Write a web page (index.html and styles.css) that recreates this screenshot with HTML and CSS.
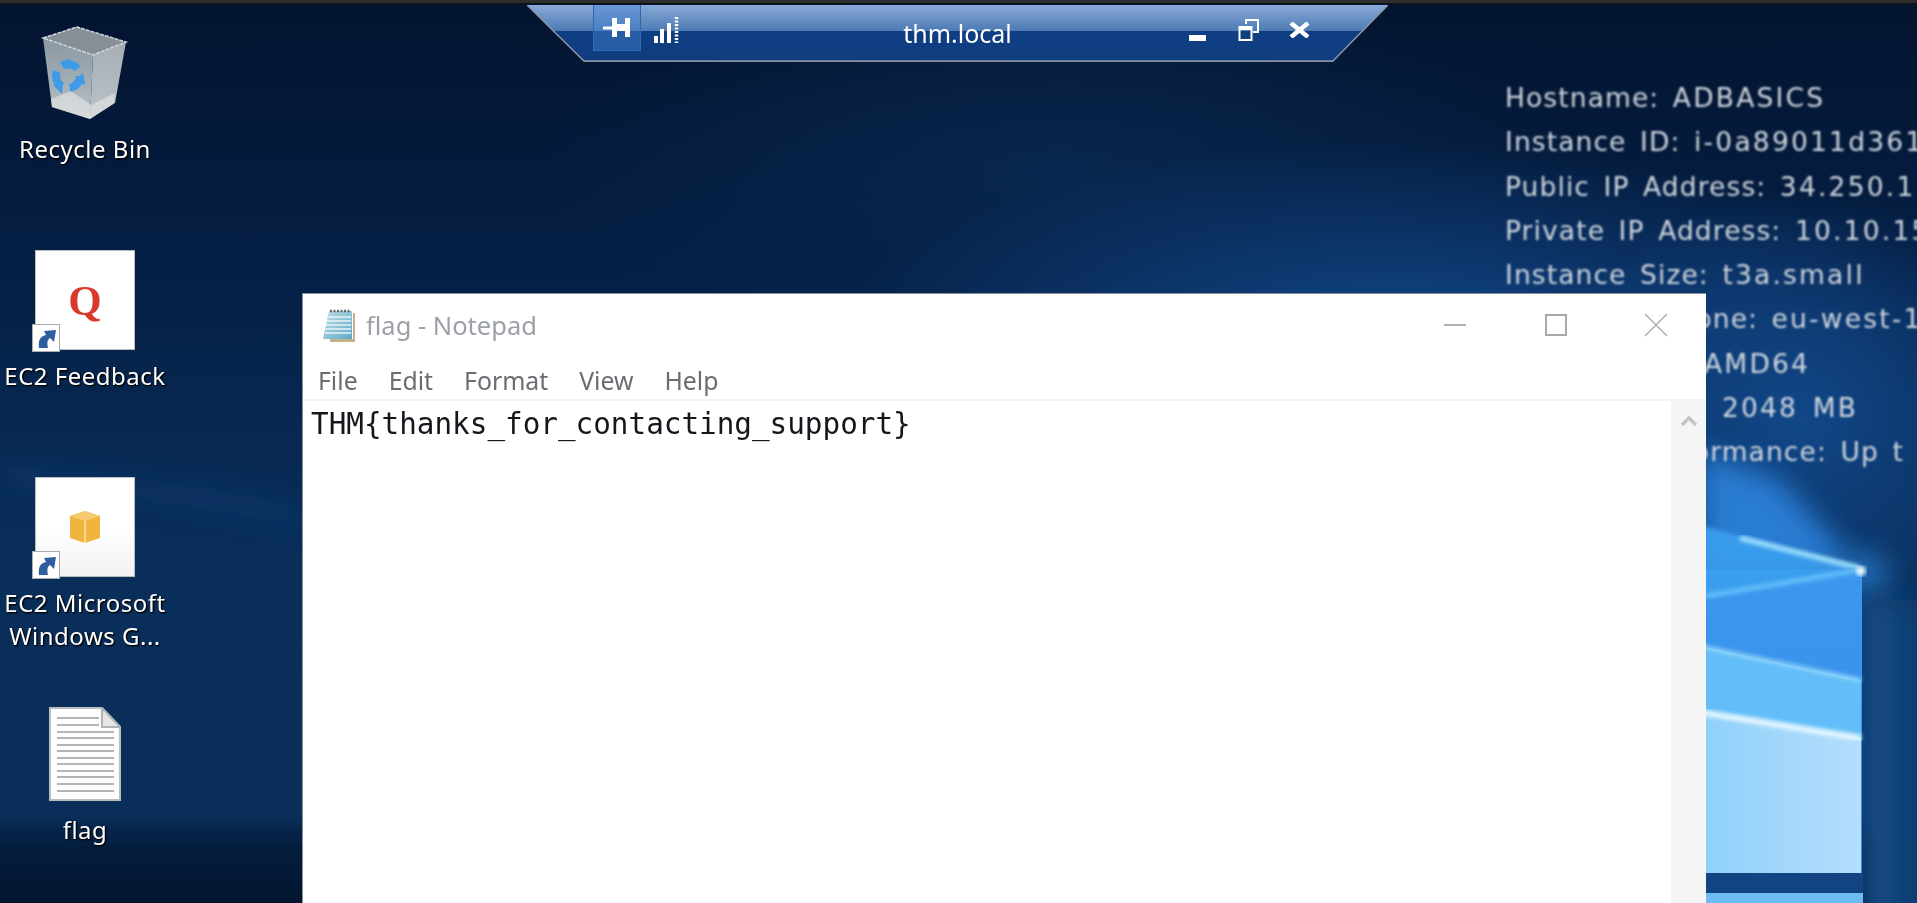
FILE: index.html
```html
<!DOCTYPE html>
<html lang="en">
<head>
    <meta charset="UTF-8">
    <meta name="viewport" content="width=device-width, initial-scale=1.0">
    <title>thm.local</title>
    <link rel="stylesheet" href="styles.css">
</head>
<body>
<div class="desktop">

    <!-- wallpaper -->
    <svg class="wallpaper" viewBox="0 0 1917 903" preserveAspectRatio="none">
        <defs>
            <linearGradient id="wpBase" x1="0" y1="0" x2="0" y2="1">
                <stop offset="0" stop-color="#03142f"/>
                <stop offset="0.3" stop-color="#051f45"/>
                <stop offset="0.6" stop-color="#092e5a"/>
                <stop offset="0.9" stop-color="#0a2f5a"/>
                <stop offset="0.94" stop-color="#041c3c"/>
                <stop offset="1" stop-color="#031630"/>
            </linearGradient>
            <radialGradient id="wpMid">
                <stop offset="0" stop-color="#0a2a54" stop-opacity="0.75"/>
                <stop offset="1" stop-color="#0a2a54" stop-opacity="0"/>
            </radialGradient>
            <radialGradient id="wpLow">
                <stop offset="0" stop-color="#114788"/>
                <stop offset="1" stop-color="#114788" stop-opacity="0"/>
            </radialGradient>
            <linearGradient id="wpRight" x1="0" y1="0" x2="1" y2="0">
                <stop offset="0" stop-color="#15528f"/>
                <stop offset="1" stop-color="#0c3464"/>
            </linearGradient>
            <linearGradient id="pane1" x1="0" y1="0" x2="0" y2="1">
                <stop offset="0" stop-color="#3b98ee"/>
                <stop offset="1" stop-color="#358de6"/>
            </linearGradient>
            <linearGradient id="pane3" x1="0" y1="0" x2="1" y2="0">
                <stop offset="0" stop-color="#8ed0fa"/>
                <stop offset="1" stop-color="#b4defc"/>
            </linearGradient>
            <filter id="soft"><feGaussianBlur stdDeviation="2"/></filter>
            <filter id="softer" x="-50%" y="-100%" width="200%" height="300%"><feGaussianBlur stdDeviation="14"/></filter>
        </defs>
        <rect width="1917" height="903" fill="url(#wpBase)"/>
        <ellipse cx="1060" cy="170" rx="520" ry="190" fill="url(#wpMid)"/>
        <ellipse cx="1400" cy="340" rx="560" ry="200" fill="url(#wpLow)"/>
        <ellipse cx="1800" cy="420" rx="260" ry="230" fill="url(#wpLow)"/>
        <path d="M1700 450 L1780 480 L1862 570 L1700 570 Z" fill="#2a80d8" opacity="0.95" filter="url(#softer)"/>
        <circle cx="1866" cy="575" r="22" fill="#2f86d8" opacity="0.7" filter="url(#softer)"/>
        <rect x="1860" y="600" width="80" height="330" fill="url(#wpRight)" filter="url(#softer)"/>
        <path d="M0 470 C80 478 220 490 300 512 L300 522 C200 500 80 488 0 482 Z" fill="#14508f" opacity="0.5" filter="url(#softer)"/>

        <!-- window logo -->
        <path d="M1700 570 L1862 570 V873 H1700 Z" fill="url(#pane1)"/>
        <path d="M1700 646 L1861 680 V740 L1700 712 Z" fill="#62bdf8"/>
        <path d="M1700 712 L1861 738 V873 H1700 Z" fill="url(#pane3)"/>
        <path d="M1700 893 H1863 V903 H1700 Z" fill="#6dbcf5"/>
        <path d="M1700 873 H1863 V893 H1700 Z" fill="#124483"/>
        <path d="M1700 525 L1860 568 L1700 600 Z" fill="#3a9ff0" opacity="0.9" filter="url(#soft)"/>
        <path d="M1740 538 L1860 568" fill="none" stroke="#a6e6ff" stroke-width="5" filter="url(#soft)"/>
        <path d="M1706 596 L1860 570" fill="none" stroke="#6cc6fb" stroke-width="4" filter="url(#soft)"/>
        <path d="M1700 646 L1861 680" stroke="#a8e2ff" stroke-width="3" filter="url(#soft)"/>
        <path d="M1700 712 L1861 738" stroke="#e8f8ff" stroke-width="6" filter="url(#soft)"/>
        <path d="M1862 568 V873" stroke="#9fdcff" stroke-width="3" filter="url(#soft)"/>
        <circle cx="1861" cy="571" r="5" fill="#e6fbff" filter="url(#soft)"/>
    </svg>

    <div class="topline"></div>

    <!-- desktop icons -->
    <div class="shortcuts">
        <div class="shortcut">
            <div class="shortcut-icon">
                <svg class="soft-icon" width="100" height="100" viewBox="0 0 100 100">
                    <defs>
                        <linearGradient id="binLeft" x1="0" y1="0" x2="0" y2="1">
                            <stop offset="0" stop-color="#8a98a3"/>
                            <stop offset="0.7" stop-color="#a9b4bb"/>
                            <stop offset="1" stop-color="#c6cbcd"/>
                        </linearGradient>
                        <linearGradient id="binRight" x1="0" y1="0" x2="0" y2="1">
                            <stop offset="0" stop-color="#a6aeb4"/>
                            <stop offset="1" stop-color="#bcc3c7"/>
                        </linearGradient>
                    </defs>
                    <path d="M8 15 L42 4 L91 19 L58 32 Z" fill="#868f96"/>
                    <path d="M8 15 L58 32 L55 96 L17 84 Z" fill="url(#binLeft)"/>
                    <path d="M58 32 L91 19 L80 80 L55 96 Z" fill="url(#binRight)"/>
                    <path d="M16 76 L36 68 L56 82 L80 70 L79 80 L55 96 L17 84 Z" fill="#dcdfdf" opacity="0.75"/>
                    <path d="M8 15 L42 4 L91 19 L58 32 Z" fill="none" stroke="#d2d8dc" stroke-width="1.5" stroke-dasharray="4 1"/>
                    <circle cx="33" cy="53" r="12" fill="none" stroke="#3f9be8" stroke-width="8" stroke-dasharray="17 8"/>
                    <path d="M33 35 L41 42 L31 47 Z M18 62 L28 60 L27 71 Z M48 50 L50 62 L39 58 Z" fill="#3f9be8"/>
                </svg>
            </div>
            <div class="shortcut-label">Recycle Bin</div>
        </div>

        <div class="shortcut">
            <div class="shortcut-icon tile">
                <span class="quote-q">Q</span>
                <span class="link-badge">
                    <svg width="22" height="22" viewBox="0 0 22 22"><path d="M4 21 C3 12 6 9 11 8 L9 4 L21 3 L19 15 L15 11 C12 13 12 16 13 21 Z" fill="#2f5f9e"/></svg>
                </span>
            </div>
            <div class="shortcut-label">EC2 Feedback</div>
        </div>

        <div class="shortcut">
            <div class="shortcut-icon tile tile-fade">
                <svg class="soft-icon" width="32" height="32" viewBox="0 0 32 32">
                    <path d="M16 0 L31 5 V27 L16 32 L1 27 V5 Z" fill="#f0b53f"/>
                    <path d="M1 5 L16 10 L31 5 L16 0 Z" fill="#f6cb70"/>
                    <path d="M15 10 H17 V32 H15 Z" fill="#f8d88e"/>
                </svg>
                <span class="link-badge">
                    <svg width="22" height="22" viewBox="0 0 22 22"><path d="M4 21 C3 12 6 9 11 8 L9 4 L21 3 L19 15 L15 11 C12 13 12 16 13 21 Z" fill="#2f5f9e"/></svg>
                </span>
            </div>
            <div class="shortcut-label">EC2 Microsoft Windows G...</div>
        </div>

        <div class="shortcut">
            <div class="shortcut-icon">
                <svg class="soft-icon" width="72" height="94" viewBox="0 0 72 94">
                    <path d="M1 1 H53 L71 20 V93 H1 Z" fill="#fdfdfd" stroke="#b9bdc0" stroke-width="2"/>
                    <path d="M53 1 V20 H71 Z" fill="#e4e6e7" stroke="#b0b4b7" stroke-width="2"/>
                    <path d="M8 11 H50 M8 18 H50 M8 25 H65 M8 31 H65 M8 38 H65 M8 44 H65 M8 51 H65 M8 57 H65 M8 64 H65 M8 70 H65 M8 77 H65 M8 84 H65" stroke="#b2b4b6" stroke-width="2"/>
                </svg>
            </div>
            <div class="shortcut-label">flag</div>
        </div>
    </div>

    <!-- bginfo text -->
    <div class="bginfo">
        <div>Hostname: <span class="val">ADBASICS</span></div>
        <div>Instance ID: <span class="val">i-0a89011d361</span></div>
        <div>Public IP Address: <span class="val">34.250.1</span></div>
        <div>Private IP Address: <span class="val">10.10.15</span></div>
        <div>Instance Size: <span class="val">t3a.small</span></div>
        <div>Availability Zone: <span class="val">eu-west-1</span></div>
        <div>Architecture: <span class="val">AMD64</span></div>
        <div>Total Memory: <span class="val">2048 MB</span></div>
        <div>Network Performance: Up t</div>
    </div>

    <!-- remote desktop connection bar -->
    <div class="connbar">
        <svg class="connbar-shape" viewBox="0 0 861 57">
            <defs>
                <linearGradient id="barFill" x1="0" y1="0" x2="0" y2="1">
                    <stop offset="0" stop-color="#8aa9d8"/>
                    <stop offset="0.46" stop-color="#4b7ab3"/>
                    <stop offset="0.46" stop-color="#103e82"/>
                    <stop offset="0.96" stop-color="#0f3d80"/>
                    <stop offset="0.96" stop-color="#7c8ea8"/>
                    <stop offset="1" stop-color="#516a8c"/>
                </linearGradient>
            </defs>
            <path d="M0 0 H861 L805 57 H58 Z" fill="url(#barFill)"/>
            <path d="M0 0 L58 57 H805 L861 0" fill="none" stroke="#8c97a6" stroke-width="1.5"/>
        </svg>
        <div class="connbar-left">
            <button class="bar-btn pin-btn">
                <svg width="28" height="20" viewBox="0 0 28 20"><path d="M0 8.5 H9 V0 H14 V6 H22 V0 H27 V19 H22 V13 H14 V19 H9 V11.5 H0 Z" fill="#fff"/></svg>
            </button>
            <svg class="signal" width="27" height="28" viewBox="0 0 27 28">
                <path d="M0 20 H4 V27 H0 Z M6 13 H10 V27 H6 Z M13 7 H17 V27 H13 Z" fill="#fff"/>
                <path d="M22.5 1 V27" stroke="#fff" stroke-width="3.5" stroke-dasharray="2 1.5"/>
            </svg>
        </div>
        <div class="connbar-title">thm.local</div>
        <div class="connbar-right">
            <svg width="17" height="6" viewBox="0 0 17 6"><rect width="17" height="6" fill="#fff"/></svg>
            <svg width="21" height="22" viewBox="0 0 21 22"><path d="M8 5 V1 H20 V13 H15" fill="none" stroke="#fff" stroke-width="2"/><path d="M1.5 8 H13.5 V21 H1.5 Z" fill="none" stroke="#fff" stroke-width="2"/><rect x="1" y="7" width="13" height="4" fill="#fff"/></svg>
            <svg class="close-x" width="21" height="16" viewBox="0 0 21 16"><path d="M2 1 L19 15 M19 1 L2 15" stroke="#fff" stroke-width="4.5"/></svg>
        </div>
    </div>

    <!-- notepad -->
    <div class="notepad">
        <div class="np-title">
            <svg class="np-icon" width="34" height="35" viewBox="0 0 34 35">
                <defs>
                    <linearGradient id="npPage" x1="0" y1="0" x2="1" y2="1">
                        <stop offset="0" stop-color="#bfe0ea"/>
                        <stop offset="1" stop-color="#5fa9c4"/>
                    </linearGradient>
                </defs>
                <path d="M31 5 H33 V34 H8 V31 H31 Z" fill="#c4b08c"/>
                <path d="M7 3 H30 V31 H1 Z" fill="url(#npPage)"/>
                <path d="M6 9 H29 M5 13 H29 M4 17 H29 M3.5 21 H29 M3 25 H29" stroke="#e9f4f7" stroke-width="1.5"/>
                <path d="M8 3 H29" stroke="#666" stroke-width="2.5" stroke-dasharray="2 1.5"/>
            </svg>
            <span class="np-title-text">flag - Notepad</span>
            <div class="np-controls">
                <svg width="24" height="24" viewBox="0 0 24 24"><path d="M1 12 H23" stroke="#b0b0b0" stroke-width="2"/></svg>
                <svg width="24" height="24" viewBox="0 0 24 24"><rect x="2" y="2" width="20" height="20" fill="none" stroke="#a8a8a8" stroke-width="2"/></svg>
                <svg width="24" height="24" viewBox="0 0 24 24"><path d="M1 1 L23 23 M23 1 L1 23" stroke="#b0b0b0" stroke-width="1.6"/></svg>
            </div>
        </div>
        <div class="np-menu">
            <span>File</span>
            <span>Edit</span>
            <span>Format</span>
            <span>View</span>
            <span>Help</span>
        </div>
        <div class="np-body">
            <div class="np-text">THM{thanks_for_contacting_support}</div>
            <div class="np-scroll">
                <svg width="18" height="12" viewBox="0 0 18 12"><path d="M2 10 L9 3 L16 10" fill="none" stroke="#c4c4c4" stroke-width="3.5"/></svg>
            </div>
        </div>
    </div>

</div>
</body>
</html>
```

FILE: styles.css
```css
*{
    box-sizing: border-box;
}

html,body{
    margin: 0;
    height: 100%;
    overflow: hidden;
    background: #03163a;
}

.desktop{
    position: relative;
    width: 1917px;
    height: 903px;
    overflow: hidden;
    font-family: "Noto Sans", sans-serif;
}

.wallpaper{
    position: absolute;
    left: 0;
    top: 0;
    width: 100%;
    height: 100%;
}

.topline{
    position: relative;
    height: 4px;
    background: #2e2e2e;
    border-bottom: 1px solid #111;
}

/* desktop icons */
.shortcuts{
    position: absolute;
    left: 0;
    top: 23px;
    width: 170px;
    display: flex;
    flex-direction: column;
}

.shortcut{
    height: 227px;
    display: flex;
    flex-direction: column;
    align-items: center;
}

.shortcut-icon{
    position: relative;
    width: 100px;
    height: 100px;
    flex: none;
    display: flex;
    align-items: center;
    justify-content: center;
}

.soft-icon{
    filter: blur(0.6px);
}

.tile{
    background: #fff;
    border: 1px solid #b8bcbf;
}

.tile-fade{
    background: linear-gradient(#fff 55%, #f2f2f2);
}

.quote-q{
    font-family: "Liberation Serif", serif;
    font-weight: bold;
    font-size: 43px;
    line-height: 1;
    color: #d8392c;
    filter: blur(0.5px);
}

.link-badge{
    position: absolute;
    left: -4px;
    bottom: -3px;
    width: 28px;
    height: 28px;
    background: #fff;
    border: 1px solid #a9adb0;
    display: flex;
    align-items: center;
    justify-content: center;
}

.shortcut-label{
    margin-top: 9px;
    width: 170px;
    text-align: center;
    color: #fff;
    font-size: 24px;
    letter-spacing: 0.5px;
    line-height: 33px;
    text-shadow: 1px 1px 2px #000, 1px 1px 1px rgba(0,0,0,0.8);
    filter: blur(0.6px);
}

/* bginfo */
.bginfo{
    position: absolute;
    left: 1505px;
    top: 76px;
    color: #d0d7df;
    font-family: "DejaVu Sans", sans-serif;
    font-size: 26.5px;
    line-height: 44.3px;
    letter-spacing: 1.1px;
    word-spacing: 4px;
    white-space: nowrap;
    filter: blur(0.8px);
}

.val{
    letter-spacing: 2.2px;
}

/* connection bar */
.connbar{
    position: absolute;
    left: 527px;
    top: 5px;
    width: 861px;
    height: 57px;
    display: flex;
    align-items: flex-start;
}

.connbar-shape{
    position: absolute;
    left: 0;
    top: 0;
    width: 100%;
    height: 100%;
}

.connbar-left{
    position: relative;
    display: flex;
    align-items: flex-start;
    gap: 13px;
    margin-left: 66px;
}

.bar-btn{
    padding: 0;
    font: inherit;
    cursor: pointer;
}

.pin-btn{
    width: 48px;
    height: 46px;
    background: rgba(70,130,210,0.45);
    border: 1px solid #2f68b4;
    border-top: 0;
    display: flex;
    align-items: center;
    justify-content: center;
}

.signal{
    margin-top: 11px;
}

.connbar-title{
    position: absolute;
    left: 0;
    right: 0;
    top: 11px;
    text-align: center;
    color: #fff;
    font-size: 25px;
    line-height: 34px;
    filter: blur(0.5px);
}

.connbar-right{
    position: absolute;
    left: 662px;
    top: 13px;
    display: flex;
    align-items: flex-end;
    gap: 32px;
    height: 23px;
}

.close-x{
    margin-left: -2px;
    margin-bottom: 3px;
}

/* notepad */
.notepad{
    position: absolute;
    left: 302px;
    top: 293px;
    width: 1404px;
    height: 610px;
    background: #fff;
    border-top: 1px solid #8a9097;
    border-left: 1px solid #8a9097;
    display: flex;
    flex-direction: column;
}

.np-title{
    height: 62px;
    display: flex;
    align-items: center;
    padding-left: 19px;
}

.np-icon{
    flex: none;
    filter: blur(0.5px);
}

.np-title-text{
    margin-left: 10px;
    font-size: 25.5px;
    color: #9ca1a8;
    filter: blur(0.5px);
}

.np-controls{
    margin-left: auto;
    margin-right: 38px;
    display: flex;
    gap: 76.5px;
}

.np-menu{
    height: 45px;
    display: flex;
    align-items: center;
    gap: 31px;
    padding-left: 15px;
    padding-top: 4px;
    font-size: 24.8px;
    color: #6a6d72;
    border-bottom: 2px solid #f5f5f5;
    filter: blur(0.4px);
}

.np-body{
    flex: 1;
    display: flex;
}

.np-text{
    flex: 1;
    padding: 5px 0 0 8px;
    font-family: "DejaVu Sans Mono", monospace;
    font-size: 29.3px;
    line-height: 36px;
    color: #14171c;
    filter: blur(0.5px);
}

.np-scroll{
    width: 35px;
    background: #f5f5f5;
    display: flex;
    justify-content: center;
    align-items: flex-start;
    padding-top: 14px;
}
```
